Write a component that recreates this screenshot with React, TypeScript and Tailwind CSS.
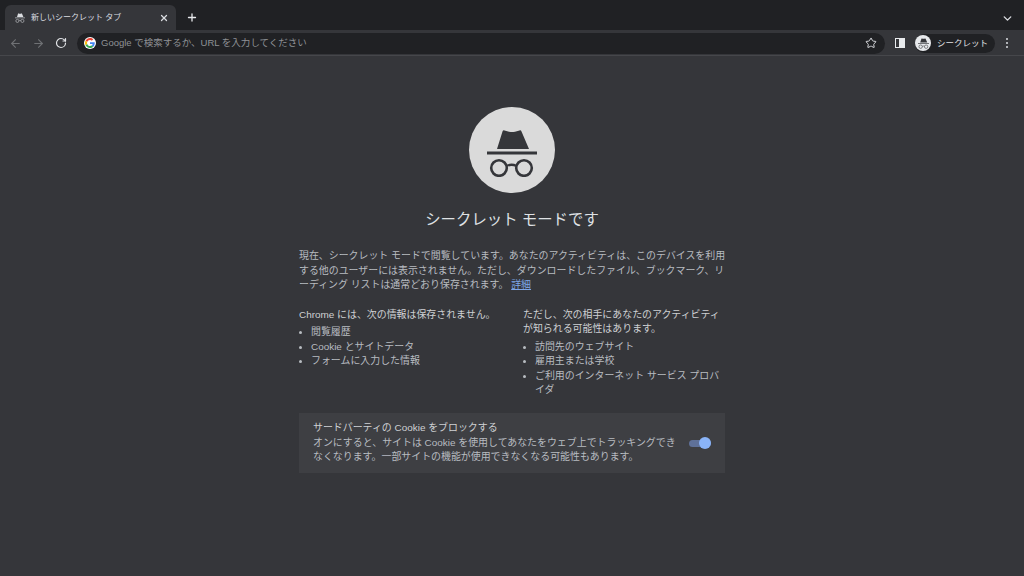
import { ArrowLeft, ArrowRight, RotateCw, Star, X, Plus, ChevronDown } from 'lucide-react';

const font = { fontFamily: '"Liberation Sans", "Noto Sans CJK JP", sans-serif' };

function SpyIcon({ className, hat = '#dadce0' }: { className?: string; hat?: string }) {
  return (
    <svg viewBox="0 0 50 47" className={className} fill="none">
      <path d="M10 19 L15.500 1.500 Q16 0 17.500 .4 L22 1.800 Q25 2.400 28 1.800 L32.500 .4 Q34 0 34.500 1.500 L42 19 Z" fill={hat} />
      <rect x="0" y="21.500" width="50" height="3" fill={hat} />
      <circle cx="12" cy="38" r="7.800" stroke={hat} strokeWidth="2.600" />
      <circle cx="37" cy="38" r="7.800" stroke={hat} strokeWidth="2.600" />
      <path d="M19.500 36 Q24.500 33.500 29.500 36" stroke={hat} strokeWidth="2.400" />
    </svg>
  );
}

function GoogleG() {
  return (
    <svg viewBox="0 0 48 48" className="h-[10px] w-[10px]">
      <path fill="#EA4335" d="M24 9.500c3.500 0 6.700 1.300 9.100 3.500l6.800-6.800C35.800 2.400 30.300 0 24 0 14.600 0 6.500 5.400 2.600 13.200l7.900 6.200C12.400 13.600 17.700 9.500 24 9.500z" />
      <path fill="#4285F4" d="M46.900 24.500c0-1.600-.2-3.100-.4-4.500H24v9h12.900c-.6 3-2.200 5.500-4.700 7.200l7.700 6c4.500-4.200 7-10.300 7-17.700z" />
      <path fill="#FBBC05" d="M10.500 28.600c-.5-1.400-.8-3-.8-4.600s.3-3.200.8-4.600l-7.900-6.200C.9 16.500 0 20.100 0 24s.9 7.500 2.600 10.800l7.900-6.200z" />
      <path fill="#34A853" d="M24 48c6.500 0 11.900-2.100 15.900-5.800l-7.700-6c-2.200 1.400-4.900 2.300-8.200 2.300-6.300 0-11.600-4.100-13.500-9.900l-7.900 6.200C6.500 42.600 14.600 48 24 48z" />
    </svg>
  );
}

export default function App() {
  return (
    <div className="flex h-[576px] w-[1024px] flex-col overflow-hidden bg-[#35363a]" style={font}>
      {/* Tab strip */}
      <div className="flex h-[30px] items-end bg-[#202124] pl-[5px]">
        <div className="flex h-[25px] w-[171px] items-center rounded-t-[6px] bg-[#35363a] pl-[10px] pr-[7px]">
          <SpyIcon className="h-[10px] w-[10px]" />
          <span className="ml-[6px] flex-1 text-[8px] text-[#dcdee1]">新しいシークレット タブ</span>
          <X size={10} strokeWidth={3} className="text-[#dadce0]" />
        </div>
        <div className="ml-[10px] flex h-[25px] w-[12px] items-center justify-center">
          <Plus size={13} strokeWidth={2.600} className="text-[#e8eaed]" />
        </div>
        <div className="flex flex-1 justify-end self-center pr-[10px] pt-[6px]">
          <ChevronDown size={13} strokeWidth={2.600} className="text-[#dadce0]" />
        </div>
      </div>

      {/* Toolbar */}
      <div className="flex h-[26px] items-center border-b border-[#46474b] bg-[#35363a] pt-px">
        <div className="flex w-[77px] items-center pl-[9px]">
          <ArrowLeft size={13} strokeWidth={2} className="text-[#6f7174]" />
          <ArrowRight size={13} strokeWidth={2} className="ml-[10px] text-[#6f7174]" />
          <RotateCw size={12} strokeWidth={2.400} className="ml-[10px] text-[#e2e4e7]" />
        </div>
        <div className="flex h-[21px] w-[808px] items-center rounded-full bg-[#202124] pl-[7px] pr-[8px]">
          <span className="flex h-[12px] w-[12px] items-center justify-center rounded-full bg-white">
            <GoogleG />
          </span>
          <span className="ml-[5px] flex-1 text-[9.500px] text-[#8f9296]">Google で検索するか、URL を入力してください</span>
          <Star size={12} strokeWidth={2} className="text-[#dadce0]" />
        </div>
        <div className="ml-[10px] flex h-[10px] w-[10px] justify-start border border-[#e8eaed]">
          <span className="h-full w-[3px]" />
          <span className="h-full flex-1 bg-[#e8eaed]" />
        </div>
        <div className="ml-[10px] flex h-[19px] w-[80px] items-center rounded-full bg-[#202124]">
          <span className="flex h-[16px] w-[16px] items-center justify-center rounded-full bg-[#e8eaed]">
            <SpyIcon className="h-[11px] w-[11px]" hat="#35363a" />
          </span>
          <span className="ml-[6px] text-[8.500px] text-[#e0e2e5]">シークレット</span>
        </div>
        <div className="ml-[11px] flex flex-col gap-[2px]">
          <span className="h-[2px] w-[2px] rounded-full bg-[#dadce0]" />
          <span className="h-[2px] w-[2px] rounded-full bg-[#dadce0]" />
          <span className="h-[2px] w-[2px] rounded-full bg-[#dadce0]" />
        </div>
      </div>

      {/* New tab page */}
      <div className="flex flex-1 flex-col items-center pt-[51px]">
        <div className="flex h-[86px] w-[86px] items-center justify-center rounded-full bg-[#dadada]">
          <SpyIcon className="mt-[6px] h-[47px] w-[50px]" hat="#35363a" />
        </div>
        <h1 className="mt-[15px] text-[15.400px] font-normal leading-[24px] text-[#dfe1e4]">シークレット モードです</h1>

        <div className="mt-[17px] w-[426px] text-[9.930px] leading-[14.500px] text-[#b8bcc1]">
          <p className="whitespace-nowrap">
            現在、シークレット モードで閲覧しています。あなたのアクティビティは、このデバイスを利用
            <br />
            する他のユーザーには表示されません。ただし、ダウンロードしたファイル、ブックマーク、リ
            <br />
            ーディング リストは通常どおり保存されます。 <span className="text-[#7ea6e6] underline">詳細</span>
          </p>

          <div className="mt-[15px] flex">
            <div className="w-[224px]">
              <p className="text-[#cfd1d4]">Chrome には、次の情報は保存されません。</p>
              <ul className="mt-[3px] list-disc pl-[12px] marker:text-[9px]">
                <li>閲覧履歴</li>
                <li>Cookie とサイトデータ</li>
                <li>フォームに入力した情報</li>
              </ul>
            </div>
            <div className="w-[202px]">
              <p className="whitespace-nowrap text-[#cfd1d4]">
                ただし、次の相手にあなたのアクティビティ
                <br />
                が知られる可能性はあります。
              </p>
              <ul className="mt-[3px] list-disc pl-[12px] marker:text-[9px]">
                <li>訪問先のウェブサイト</li>
                <li>雇用主または学校</li>
                <li className="whitespace-nowrap">
                  ご利用のインターネット サービス プロバ
                  <br />
                  イダ
                </li>
              </ul>
            </div>
          </div>

          <div className="mt-[15px] flex h-[60px] items-center bg-[#3e3f43] pl-[14px] pr-[14px] pt-px">
            <div className="flex-1 whitespace-nowrap">
              <p className="text-[#cfd1d4]">サードパーティの Cookie をブロックする</p>
              <p>
                オンにすると、サイトは Cookie を使用してあなたをウェブ上でトラッキングでき
                <br />
                なくなります。一部サイトの機能が使用できなくなる可能性もあります。
              </p>
            </div>
            <div className="relative h-[7px] w-[22px] shrink-0 rounded-full bg-[#5f7199]">
              <span className="absolute right-0 top-[-2.500px] h-[12px] w-[12px] rounded-full bg-[#8ab4f8]" />
            </div>
          </div>
        </div>
      </div>
    </div>
  );
}
